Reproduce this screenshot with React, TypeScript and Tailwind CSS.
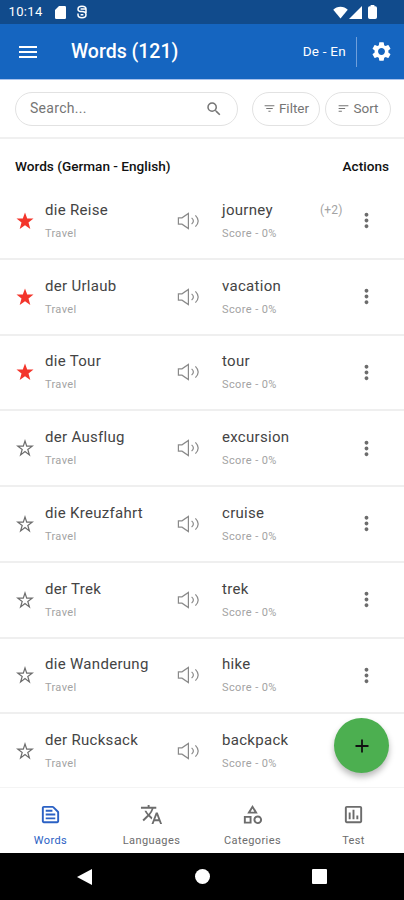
import React from 'react';
import {
  MdFilterList,
  MdMenu,
  MdMoreVert,
  MdOutlineCategory,
  MdOutlinePoll,
  MdOutlineTextSnippet,
  MdSearch,
  MdSettings,
  MdSort,
  MdTranslate,
} from 'react-icons/md';

interface Word {
  source: string;
  target: string;
  category: string;
  score: number;
  starred: boolean;
  extra?: number;
}

const words: Word[] = [
  { source: 'die Reise', target: 'journey', category: 'Travel', score: 0, starred: true, extra: 2 },
  { source: 'der Urlaub', target: 'vacation', category: 'Travel', score: 0, starred: true },
  { source: 'die Tour', target: 'tour', category: 'Travel', score: 0, starred: true },
  { source: 'der Ausflug', target: 'excursion', category: 'Travel', score: 0, starred: false },
  { source: 'die Kreuzfahrt', target: 'cruise', category: 'Travel', score: 0, starred: false },
  { source: 'der Trek', target: 'trek', category: 'Travel', score: 0, starred: false },
  { source: 'die Wanderung', target: 'hike', category: 'Travel', score: 0, starred: false },
  { source: 'der Rucksack', target: 'backpack', category: 'Travel', score: 0, starred: false },
];

const tabs = [
  { label: 'Words', icon: MdOutlineTextSnippet, active: true },
  { label: 'Languages', icon: MdTranslate, active: false },
  { label: 'Categories', icon: MdOutlineCategory, active: false },
  { label: 'Test', icon: MdOutlinePoll, active: false },
];

function Star({ filled }: { filled: boolean }) {
  return (
    <svg viewBox="0 0 18 18" className={`size-[18px] ${filled ? 'text-[#f3352b]' : 'text-[#6c6c6c]'}`}>
      <path
        d={
          filled
            ? 'M9 .5 11.2 6.5H17.5L12.5 10.5 14.3 17 9 13.3 3.7 17 5.5 10.5 .5 6.5H6.8Z'
            : 'M9 2 10.7 7.2H16.2L11.8 10.5 13.4 15.9 9 12.6 4.6 15.9 6.2 10.5 1.8 7.2H7.3Z'
        }
        fill={filled ? 'currentColor' : 'none'}
        stroke={filled ? 'none' : 'currentColor'}
        strokeWidth="1.2"
      />
    </svg>
  );
}

function Speaker() {
  return (
    <svg viewBox="0 0 22 18" className="h-[18px] w-[22px] text-[#8a8a8a]" fill="none" stroke="currentColor" strokeWidth="1.2">
      <path d="M1.4 5.8H5L11.4 1.4V16.6L5 12.2H1.4Z" />
      <path d="M14.6 5.9Q18.2 9 14.6 12.1M18.4 3.4Q24 9 18.4 14.6" />
    </svg>
  );
}

function StatusBar() {
  return (
    <div className="flex h-6 items-center bg-[#114b8c] pl-[8.5px] pr-[27px] text-white">
      <span className="text-[13px] tracking-[0.35px]">10:14</span>
      <svg viewBox="0 0 11 13" className="ml-[12px] h-[13px] w-[11px]" fill="currentColor">
        <path d="M4 0H9.8Q11 0 11 1.2V11.8Q11 13 9.8 13H1.2Q0 13 0 11.8V4Z" />
      </svg>
      <svg viewBox="0 0 12 14" className="ml-[10px] h-[14px] w-3" fill="none" stroke="currentColor" strokeWidth="1.5">
        <path d="M10 4.2C10 2 8 1.2 6 1.2S2 2 2 4.2 3.4 6.6 6 6.6 10 7.4 10 9.8 8 12.8 6 12.8 2 12 2 9.8V8.6M10 3.4V8M4.6 4H10M4.6 9.8H7.4" />
      </svg>
      <svg viewBox="0 0 16 14" className="ml-auto h-[13px] w-[15px]" fill="currentColor">
        <path d="M8 13.5 0.2 4C2.2 1.9 5 .8 8 .8S13.8 1.9 15.8 4Z" />
      </svg>
      <svg viewBox="0 0 13 13" className="ml-[1px] size-[13px]" fill="currentColor">
        <path d="M13 0V13H0Z" />
      </svg>
      <svg viewBox="0 0 9 14" className="ml-[6px] h-[14px] w-[9px]" fill="currentColor">
        <path d="M2.6 0H6.4V1.3H7.4Q9 1.3 9 3V12.2Q9 14 7.2 14H1.8Q0 14 0 12.2V3Q0 1.3 1.6 1.3H2.6Z" />
      </svg>
    </div>
  );
}

function Header() {
  return (
    <header className="flex h-14 items-center border-b border-[#a9c2ec] bg-[#1565c0] pl-4 pr-[11px] text-white">
      <MdMenu className="size-6" />
      <h1 className="ml-[31px] pt-px text-[19.5px] font-medium">Words (121)</h1>
      <span className="ml-auto text-[13.5px] tracking-[0.25px]">De - En</span>
      <span className="ml-[10px] h-[30px] w-px bg-[#6f9fdb]" />
      <MdSettings className="ml-[13px] size-[23px]" />
    </header>
  );
}

function WordRow({ word }: { word: Word }) {
  return (
    <div className="flex h-[75.75px] shrink-0 items-center border-b-2 border-[#efefef] pl-4">
      <Star filled={word.starred} />
      <div className="ml-[11px] w-[132px]">
        <div className="text-[15px] leading-5 tracking-[0.3px] text-[#444]">{word.source}</div>
        <div className="mt-[6px] text-[11px] leading-4 tracking-[0.35px] text-[#a3a3a3]">{word.category}</div>
      </div>
      <Speaker />
      <div className="ml-[23px] w-[98px]">
        <div className="text-[15px] leading-5 tracking-[0.3px] text-[#444]">{word.target}</div>
        <div className="mt-[6px] text-[11px] leading-4 tracking-[0.4px] text-[#a3a3a3]">Score - {word.score}%</div>
      </div>
      <div className="-mt-[22px] w-[35px] text-[12px] tracking-[0.2px] text-[#a3a3a3]">
        {word.extra ? `(+${word.extra})` : ''}
      </div>
      <MdMoreVert className="size-[23px] text-[#6c6c6c]" />
    </div>
  );
}

export default function App() {
  return (
    <div className="flex h-[900px] w-[404px] flex-col overflow-hidden bg-white font-['Roboto',sans-serif]">
      <StatusBar />
      <Header />

      <div className="flex h-[59px] shrink-0 items-center border-b-2 border-[#f0f0f0] pl-[15px]">
        <div className="flex h-[34px] w-[223px] items-center justify-between rounded-full border border-[#e2e2e2] pl-[14px] pr-[14px] text-[#757575]">
          <span className="text-[14px] tracking-[0.3px]">Search...</span>
          <MdSearch className="size-[18px]" />
        </div>
        <button className="ml-[14px] flex h-[34px] w-[68px] items-center justify-center gap-[3px] rounded-full border border-[#e2e2e2] text-[13.5px] text-[#757575]">
          <MdFilterList className="size-[13px]" />
          Filter
        </button>
        <button className="ml-[5px] flex h-[34px] w-[66px] items-center justify-center gap-[3px] rounded-full border border-[#e2e2e2] text-[13.5px] text-[#757575]">
          <MdSort className="size-[13px]" />
          Sort
        </button>
      </div>

      <div className="flex h-[45px] shrink-0 items-center justify-between px-[15px] pt-[10px] text-[13.6px] font-medium text-[#111]">
        <span>Words (German - English)</span>
        <span>Actions</span>
      </div>

      <main className="relative flex h-[603px] shrink-0 flex-col">
        {words.map((word) => (
          <WordRow key={word.source} word={word} />
        ))}
        <button className="absolute right-[15px] bottom-[14px] flex size-[55px] items-center justify-center rounded-full bg-[#4caf50] shadow-[0_4px_6px_rgba(0,0,0,0.28)]">
          <svg viewBox="0 0 14 14" className="size-[14px]" stroke="#111" strokeWidth="1.8">
            <path d="M7 .5V13.5M.5 7H13.5" />
          </svg>
        </button>
      </main>

      <nav className="relative flex h-[66px] shrink-0 border-t border-[#f4f4f4] bg-white">
        {tabs.map(({ label, icon: Icon, active }) => (
          <div
            key={label}
            className={`flex flex-1 flex-col items-center pt-[15px] ${active ? 'text-[#2b61c4]' : 'text-[#6c6c6c]'}`}
          >
            <Icon className="size-[23px]" />
            <span className="mt-[7px] text-[11px] leading-4 tracking-[0.4px]">{label}</span>
          </div>
        ))}
      </nav>

      <div className="flex h-[47px] shrink-0 items-center bg-black text-white">
        <svg viewBox="0 0 15 16" className="ml-[77px] h-4 w-[15px]" fill="currentColor">
          <path d="M15 0V16L0 8Z" />
        </svg>
        <span className="ml-[103px] size-[15px] rounded-full bg-white" />
        <span className="ml-[102px] size-[15px] rounded-[1px] bg-white" />
      </div>
    </div>
  );
}
